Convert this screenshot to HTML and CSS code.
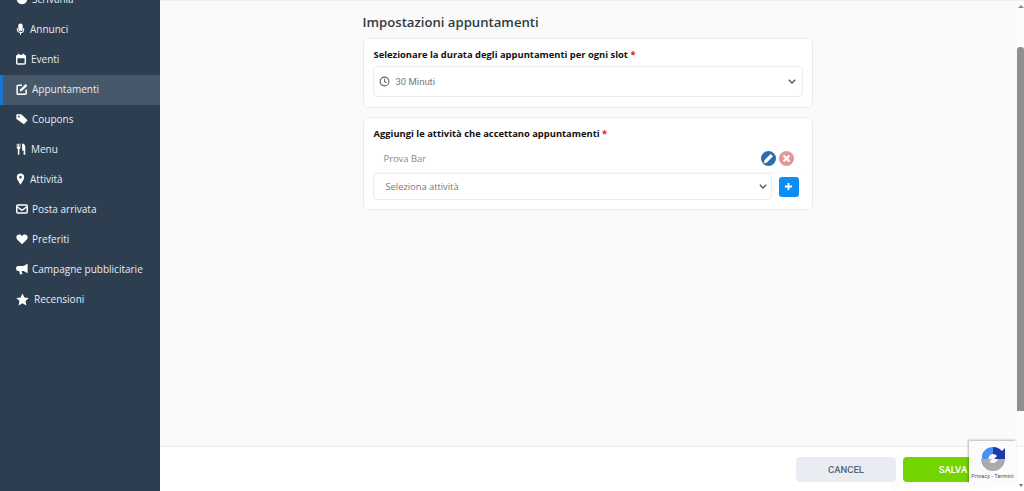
FILE: index.html
```html
<!DOCTYPE html>
<html lang="it">
<head>
<meta charset="utf-8">
<title>Impostazioni appuntamenti</title>
<link rel="stylesheet" href="styles.css">
</head>
<body>
<div class="app">
  <aside class="sidebar">
    <ul class="nav">
      <li class="nav-item"><svg class="ico" viewBox="0 0 16 16"><circle cx="8" cy="8" r="7" fill="#fff"/></svg><span class="lbl">Scrivania</span></li>
      <li class="nav-item gap-narrow"><svg class="ico ico-n" viewBox="0 0 10 16"><rect x="2" y=".5" width="6" height="10.500" rx="3" fill="#fff"/><path d="M.8 7v1.500a4.200 4.200 0 0 0 8.400 0V7M5 12.500V15.500" fill="none" stroke="#fff" stroke-width="1.400"/></svg><span class="lbl">Annunci</span></li>
      <li class="nav-item gap-narrow"><svg class="ico ico-c" viewBox="0 0 14 16"><path d="M3.500.8v3M10.500.8v3" stroke="#fff" stroke-width="2"/><rect x="1" y="3" width="12" height="12" rx="1.500" fill="none" stroke="#fff" stroke-width="2"/><rect x="1" y="3" width="12" height="4" fill="#fff"/></svg><span class="lbl">Eventi</span></li>
      <li class="nav-item active"><svg class="ico" viewBox="0 0 16 16"><path d="M8 3H3A1.500 1.500 0 0 0 1.500 4.500v9A1.500 1.500 0 0 0 3 15h9a1.500 1.500 0 0 0 1.500-1.500V8.500" fill="none" stroke="#fff" stroke-width="2"/><path d="M5.500 8.500 12.800 1.200l2.300 2.300-7.300 7.300-2.800.5z" fill="#fff"/></svg><span class="lbl">Appuntamenti</span></li>
      <li class="nav-item"><svg class="ico" viewBox="0 0 16 16"><path d="M.5 1.500h6.500l8.500 8-5 5.500L.5 8z" fill="#fff"/><circle cx="3.800" cy="4.800" r="1.200" fill="#2c3e50"/></svg><span class="lbl">Coupons</span></li>
      <li class="nav-item gap-narrow"><svg class="ico ico-m" viewBox="0 0 12 16"><path d="M.3 1v5a2 2 0 0 0 1.500 1.900V15.500h2V7.900A2 2 0 0 0 5.300 6V1H4.200v4.200h-.7V1H2.200v4.200h-.8V1zM7.500.8c2.600 0 4.200 1.900 4.200 5v9.700H9.500V10H7.500z" fill="#fff"/></svg><span class="lbl">Menu</span></li>
      <li class="nav-item gap-narrow"><svg class="ico ico-n" viewBox="0 0 10 16"><path fill-rule="evenodd" d="M5 .8a4.900 4.900 0 0 1 4.900 4.900C9.900 9 5 15.500 5 15.500S.1 9 .1 5.700A4.900 4.900 0 0 1 5 .8zm0 3.200a1.700 1.700 0 1 0 0 3.400A1.700 1.700 0 0 0 5 4z" fill="#fff"/></svg><span class="lbl">Attività</span></li>
      <li class="nav-item"><svg class="ico" viewBox="0 0 16 16"><rect x="1" y="2.800" width="14" height="10.500" rx="1.500" fill="none" stroke="#fff" stroke-width="2"/><path d="M1.500 5 8 9.800 14.500 5" fill="none" stroke="#fff" stroke-width="2"/></svg><span class="lbl">Posta arrivata</span></li>
      <li class="nav-item"><svg class="ico" viewBox="0 0 16 16"><path d="M8 15 1.800 9C-1 6 .8 2 4.300 2 6 2 7.200 2.800 8 4c.8-1.200 2-2 3.700-2 3.500 0 5.300 4 2.500 7z" fill="#fff"/></svg><span class="lbl">Preferiti</span></li>
      <li class="nav-item"><svg class="ico" viewBox="0 0 16 16"><path d="M15.500 1v12.500L10 10.500H7.500l1 4.500H5.200L4.200 10.500H3.200a3 3 0 0 1 0-6.500H10z" fill="#fff"/></svg><span class="lbl">Campagne pubblicitarie</span></li>
      <li class="nav-item gap-star"><svg class="ico ico-s" viewBox="0 0 16 16"><path d="m8 .5 2.300 5 5.400.7-4 3.700 1.100 5.400L8 12.600l-4.800 2.700 1.100-5.400-4-3.700 5.400-.7z" fill="#fff"/></svg><span class="lbl">Recensioni</span></li>
    </ul>
  </aside>
  <main class="main">
    <div class="content">
      <div class="column">
        <h1 class="title">Impostazioni appuntamenti</h1>
        <section class="card card-slot">
          <label class="field-label">Selezionare la durata degli appuntamenti per ogni slot <span class="req">*</span></label>
          <div class="select select-tall">
            <svg class="clock" viewBox="0 0 12 12"><circle cx="6" cy="6" r="4.800" fill="none" stroke="#666" stroke-width="1.200"/><path d="M6 3V6l2 1.400" fill="none" stroke="#666" stroke-width="1.100"/></svg>
            <span class="select-text roboto">30 Minuti</span>
            <svg class="chev" viewBox="0 0 8 5"><path d="M.8.8 4 4 7.200.8" fill="none" stroke="#555" stroke-width="1.300"/></svg>
          </div>
        </section>
        <section class="card card-act">
          <label class="field-label">Aggiungi le attività che accettano appuntamenti <span class="req">*</span></label>
          <div class="act-row">
            <span class="act-name">Prova Bar</span>
            <span class="round edit"><svg viewBox="0 0 14 14"><path d="M2.500 11.500l.8-3 5.700-5.700 2.200 2.200-5.700 5.700z" fill="#fff"/></svg></span>
            <span class="round del"><svg viewBox="0 0 14 14"><path d="M4.300 4.300l5.400 5.400M9.700 4.300 4.300 9.700" stroke="#fff" stroke-width="2"/></svg></span>
          </div>
          <div class="add-row">
            <div class="select select-add">
              <span class="select-text">Seleziona attività</span>
              <svg class="chev" viewBox="0 0 8 5"><path d="M.8.8 4 4 7.200.8" fill="none" stroke="#555" stroke-width="1.300"/></svg>
            </div>
            <span class="add-btn"><svg viewBox="0 0 10 10"><path d="M5 1v8M1 5h8" stroke="#fff" stroke-width="2"/></svg></span>
          </div>
        </section>
      </div>
      <div class="scrollbar"><span class="arrow-up"></span><span class="thumb"></span></div>
    </div>
    <footer class="footer">
      <button class="btn cancel">CANCEL</button>
      <button class="btn save">SALVA</button>
      <span class="arrow-down"></span>
      <span class="bump"></span>
    </footer>
    <div class="recaptcha">
      <svg class="rc-logo" viewBox="0 0 26 26">
        <path d="M1 13H12L9.500 15.500A5 5 0 0 0 18 13H25A12 12 0 0 1 1 13Z" fill="#ababab"/>
        <path d="M13 1A12 12 0 0 0 2 9V13H8.500A5 5 0 0 1 13 8Z" fill="#4a90f5"/>
        <path d="M13 1A12 12 0 0 1 22 5L25 2V13H14L17 10A5 5 0 0 0 13 8Z" fill="#1c3aa9"/>
      </svg>
      <span class="rc-text">Privacy - Termini</span>
    </div>
  </main>
</div>
</body>
</html>
```
FILE: styles.css
```css
* { box-sizing: border-box; }
html, body { margin: 0; height: 100%; overflow: hidden; }
body { font-family: "Open Sans", sans-serif; background: #fafafa; }
.app { display: flex; height: 491px; }
.sidebar { width: 160px; flex: none; background: #2c3e50; overflow: hidden; }
.nav { list-style: none; margin: -15px 0 0; padding: 0; }
.nav-item { height: 30px; display: flex; align-items: center; gap: 4px; padding: 0 0 2px 16px; color: #e8edf2; font-size: 10px; }
.nav-item.gap-narrow { gap: 5px; }
.nav-item.gap-star { gap: 5px; }
.nav-item.active { background: #47586a; box-shadow: inset 3px 0 0 #1a76d2; }
.ico { width: 12px; height: 12px; flex: none; }
.ico-n { width: 9px; }
.ico-c { width: 10px; }
.ico-m { width: 10px; }
.ico-s { width: 13px; height: 13px; }
.lbl { white-space: nowrap; }
.main { flex: 1; min-width: 0; display: flex; flex-direction: column; position: relative; }
.content { flex: 1; display: flex; justify-content: center; border-top: 1px solid #eeeeee; padding-right: 9px; position: relative; }
.column { width: 450px; padding-top: 13px; }
.title { margin: 0 0 7px; font-size: 13.150px; line-height: 17px; font-weight: 600; color: #333a40; }
.card { background: #fff; border: 1px solid #ececec; border-radius: 5px; padding: 8px 9px; }
.card-slot { height: 70px; margin-bottom: 9px; }
.card-act { height: 93px; }
.field-label { display: block; font-size: 9.400px; line-height: 15px; font-weight: 700; color: #111; padding-left: 1px; }
.req { color: #e11; }
.select { display: flex; align-items: center; background: #fff; border: 1px solid #ececec; border-radius: 4px; color: #777; }
.select-tall { height: 31px; margin-top: 4px; padding: 0 6px 0 5px; }
.select-add { flex: 1; height: 27px; padding: 0 4px 0 12px; }
.select-text { flex: 1; font-size: 9.300px; color: #777; }
.roboto { font-family: Roboto, sans-serif; font-size: 9.500px; }
.clock { width: 11px; height: 11px; margin-right: 6px; flex: none; }
.chev { width: 8px; height: 5px; flex: none; }
.act-row { display: flex; align-items: center; height: 29px; margin-top: 3px; padding: 0 9px 0 11px; border-bottom: 1px solid #f7f7f7; }
.act-name { flex: 1; font-size: 9.400px; color: #888; }
.round { width: 15px; height: 15px; border-radius: 50%; display: flex; }
.round svg { width: 15px; height: 15px; }
.edit { background: #2a6db5; }
.del { background: #dd9a98; margin-left: 3px; }
.add-row { display: flex; align-items: center; gap: 7px; padding-right: 4px; }
.add-btn { width: 20px; height: 20px; border-radius: 3px; background: #0a8df5; display: flex; align-items: center; justify-content: center; flex: none; }
.add-btn svg { width: 9px; height: 9px; }
.scrollbar { position: absolute; top: 0; right: 0; bottom: 0; width: 7px; background: #fdfdfd; }
.arrow-up { position: absolute; top: 4px; left: 1px; border: 3px solid transparent; border-top: 0; border-bottom: 3px solid #8a8a8a; }
.thumb { position: absolute; top: 46px; left: 0; width: 7px; height: 364px; background: #8f8f8f; border-radius: 3px 3px 0 0; }
.footer { height: 45px; flex: none; background: #fff; border-top: 1px solid #ebebeb; display: flex; justify-content: flex-end; align-items: flex-start; gap: 7px; padding: 10px 8px 0 0; position: relative; }
.btn { height: 25px; border: 0; border-radius: 4px; font-family: Roboto, sans-serif; font-size: 9.500px; font-weight: 500; }
.cancel { width: 100px; background: #e9edf3; color: #5a6472; }
.save { width: 113px; background: #72d500; color: #fff; text-align: center; padding: 0 13px 0 0; }
.arrow-down { position: absolute; right: 1px; bottom: 4px; border: 2.500px solid transparent; border-bottom: 0; border-top: 3px solid #777; }
.bump { position: absolute; left: 733px; width: 97px; bottom: 0; height: 7px; background: #fdfdfd; box-shadow: 0 0 2px rgba(0,0,0,.08); }
.recaptcha { position: absolute; right: 8px; top: 441px; width: 47px; height: 43px; background: #fbfbfb; box-shadow: -1px -1px 2px rgba(0,0,0,.28); display: flex; flex-direction: column; align-items: center; }
.rc-logo { width: 26px; height: 26px; margin-top: 5px; }
.rc-text { font-family: Roboto, sans-serif; font-size: 5.800px; color: #555; white-space: nowrap; margin-top: 1px; }
```
